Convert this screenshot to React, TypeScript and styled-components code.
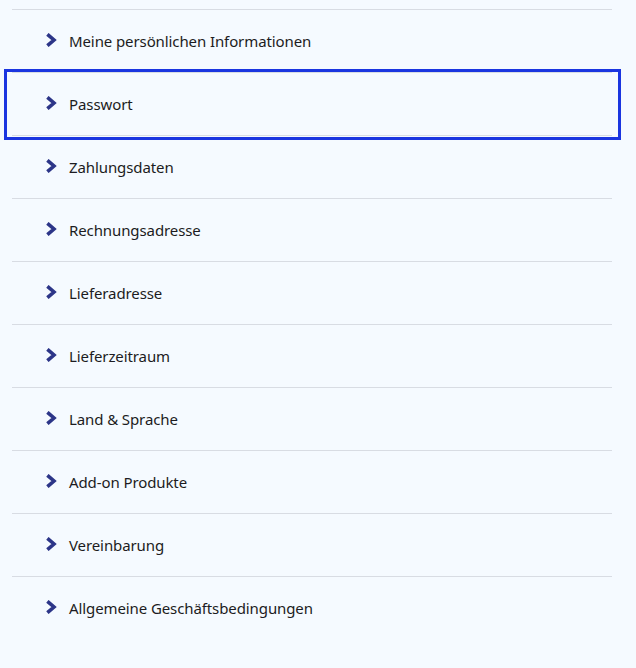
import React, { FC } from 'react';

import styled, { createGlobalStyle } from 'styled-components';

/**
 *
 * Styles
 */
const GlobalStyle = createGlobalStyle`
  html, body {
    margin: 0;
    padding: 0;
    background: #f5faff;
  }

  body {
    font-family: 'Noto Sans', 'DejaVu Sans', sans-serif;
    color: #1c1c22;
  }
`;

const Page = styled.div`
  width: 636px;
  height: 668px;
  padding-top: 9px;
  box-sizing: border-box;
  background: #f5faff;
`;

const MenuList = styled.ul`
  list-style: none;
  margin: 0 24px 0 12px;
  padding: 0;

  border-top: 1px solid #d8dce3;
`;

const MenuRow = styled.li<{ isFocused: boolean; isLastItem: boolean }>`
  position: relative;
  display: flex;
  height: 62px;

  align-items: center;
  gap: 12px;

  padding-left: 33px;

  border-bottom: ${({ isLastItem }) => (isLastItem ? 'none' : '1px solid #d8dce3')};

  ${({ isFocused }) =>
    isFocused &&
    `
    &::after {
      content: '';
      position: absolute;
      top: -4px;
      bottom: -5px;
      left: -8px;
      right: -9px;
      border: 3px solid #1a35e0;
      pointer-events: none;
    }
  `};
`;

const Chevron = styled.svg`
  width: 12px;
  height: 14px;
  flex-shrink: 0;
  margin-top: -3px;
`;

const MenuLabel = styled.span`
  font-size: 15px;
  line-height: 20px;
  letter-spacing: -0.1px;
`;

/**
 *
 * Static items
 */
const menuItems = [
  'Meine persönlichen Informationen',
  'Passwort',
  'Zahlungsdaten',
  'Rechnungsadresse',
  'Lieferadresse',
  'Lieferzeitraum',
  'Land & Sprache',
  'Add-on Produkte',
  'Vereinbarung',
  'Allgemeine Geschäftsbedingungen',
];

const focusedIndex = 1;

const App: FC = () => (
  <Page>
    <GlobalStyle />
    <MenuList>
      {menuItems.map((label, index) => (
        <MenuRow
          key={label}
          isFocused={index === focusedIndex}
          isLastItem={index === menuItems.length - 1}
        >
          <Chevron viewBox="0 0 12 14">
            <path
              d="M2.4 1.3 L9 7 L2.4 12.7"
              fill="none"
              stroke="#2c3588"
              strokeWidth="3.6"
              strokeLinejoin="miter"
            />
          </Chevron>
          <MenuLabel>{label}</MenuLabel>
        </MenuRow>
      ))}
    </MenuList>
  </Page>
);

export default App;
